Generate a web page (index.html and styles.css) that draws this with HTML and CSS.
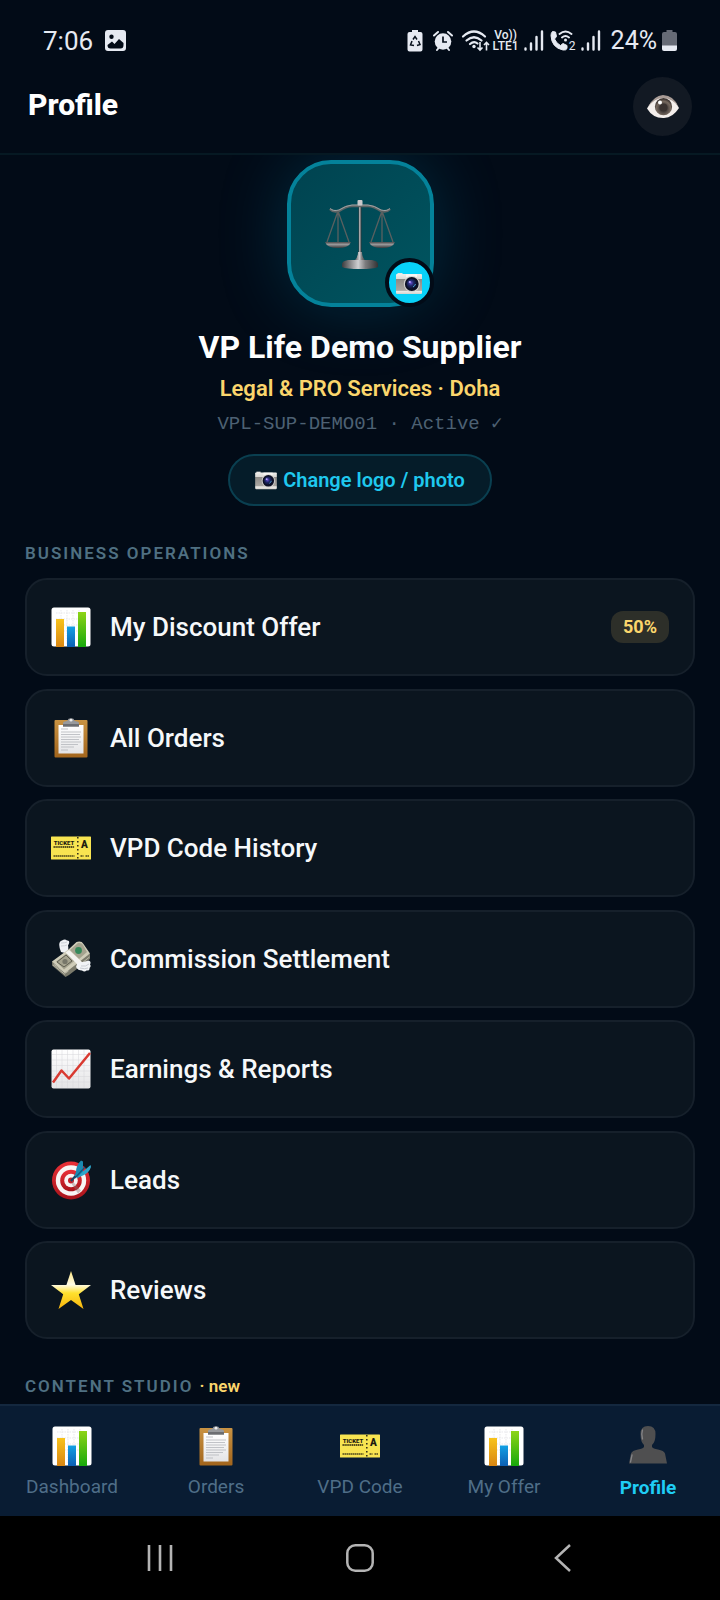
FILE: index.html
```html
<!DOCTYPE html>
<html lang="en">
<head>
<meta charset="utf-8">
<meta name="viewport" content="width=device-width, initial-scale=1">
<title>Profile</title>
<link rel="stylesheet" href="styles.css">
</head>
<body>
<svg class="sprite" aria-hidden="true">
  <defs>
    <linearGradient id="gold" x1="0" y1="0" x2="0" y2="1"><stop offset="0" stop-color="#f8c31c"/><stop offset="1" stop-color="#d98612"/></linearGradient>
    <linearGradient id="blue" x1="0" y1="0" x2="0" y2="1"><stop offset="0" stop-color="#12a0e4"/><stop offset="1" stop-color="#0c5fb4"/></linearGradient>
    <linearGradient id="green" x1="0" y1="0" x2="0" y2="1"><stop offset="0" stop-color="#8ed416"/><stop offset="1" stop-color="#17a80c"/></linearGradient>
    <linearGradient id="paper" x1="0" y1="0" x2="0" y2="1"><stop offset="0" stop-color="#ffffff"/><stop offset="1" stop-color="#e4e4e6"/></linearGradient>
    <linearGradient id="board" x1="0" y1="0" x2="0" y2="1"><stop offset="0" stop-color="#c99343"/><stop offset="1" stop-color="#a3651c"/></linearGradient>
    <linearGradient id="star" x1="0" y1="0" x2="0" y2="1"><stop offset="0" stop-color="#ffe680"/><stop offset=".36" stop-color="#fffbe6"/><stop offset=".58" stop-color="#ffe12e"/><stop offset="1" stop-color="#f8b40c"/></linearGradient>
    <linearGradient id="metal" x1="0" y1="0" x2="1" y2="0"><stop offset="0" stop-color="#3c3c3e"/><stop offset=".45" stop-color="#d0d0d2"/><stop offset=".65" stop-color="#7c7c7e"/><stop offset="1" stop-color="#333335"/></linearGradient>
    <linearGradient id="pan" x1="0" y1="0" x2="0" y2="1"><stop offset="0" stop-color="#4a4a4c"/><stop offset=".4" stop-color="#99999b"/><stop offset="1" stop-color="#39393b"/></linearGradient>
    <linearGradient id="camera" x1="0" y1="0" x2="0" y2="1"><stop offset="0" stop-color="#f0efec"/><stop offset=".24" stop-color="#dddbd7"/><stop offset=".26" stop-color="#8c8985"/><stop offset=".82" stop-color="#aaa7a2"/><stop offset=".85" stop-color="#efeeeb"/><stop offset="1" stop-color="#d5d2cd"/></linearGradient>
    <radialGradient id="lens" cx=".4" cy=".4" r=".6"><stop offset="0" stop-color="#6a4fd8"/><stop offset=".45" stop-color="#1e2868"/><stop offset="1" stop-color="#080c22"/></radialGradient>
    <radialGradient id="iris" cx=".5" cy=".6" r=".55"><stop offset="0" stop-color="#3b3330"/><stop offset=".4" stop-color="#4a4340"/><stop offset=".75" stop-color="#76695f"/><stop offset="1" stop-color="#3d3531"/></radialGradient>
    <linearGradient id="red" x1="0" y1="0" x2="0" y2="1"><stop offset="0" stop-color="#ea3037"/><stop offset="1" stop-color="#a9141b"/></linearGradient>
  </defs>

  <symbol id="i-bars" viewBox="0 0 40 40">
    <rect x=".5" y=".5" width="39" height="39" rx="2.5" fill="#fff"/>
    <path d="M5 6h30M5 12h30M5 18h30M5 24h30M10 3v34M16 3v34M22 3v34M28 3v34" stroke="#dedee2" stroke-width=".7" stroke-dasharray="1.5 1"/>
    <path d="M5 12h8v28H5z" fill="url(#gold)"/>
    <path d="M16 19.500h8V40h-8z" fill="url(#blue)"/>
    <path d="M27 5h8v35h-8z" fill="url(#green)"/>
  </symbol>

  <symbol id="i-clip" viewBox="0 0 40 40">
    <rect x="3.500" y="2" width="33" height="37.500" rx="1" fill="url(#board)"/>
    <path d="M7.500 7h25v28.500h-25z" fill="url(#paper)"/>
    <path d="M10 11h7M10 14h20M10 16.500h19M10 19h20M10 21.500h18M10 24h20M10 26.500h17M10 29h13M10 32h7" stroke="#b4b6bb" stroke-width=".8"/>
    <path d="M12 8.500V5q0-1.500 3-1.800l1.500-.7Q17 .3 20 .3t3.500 2.200l1.500.7q3 .3 3 1.800v3.500z" fill="#97999c"/>
    <path d="M12 6h16v2.600H12z" fill="#6c6e72"/>
    <circle cx="20" cy="2.200" r="1.400" fill="#ececee"/>
  </symbol>

  <symbol id="i-ticket" viewBox="0 0 40 40">
    <rect x="0" y="8.500" width="40" height="23" rx=".6" fill="#f8e451"/>
    <path d="M26.800 9v23" stroke="#2a2717" stroke-width="1.500" stroke-dasharray="1.500 2.500"/>
    <path d="M2.500 19h21" stroke="#554d1c" stroke-width="1.800" stroke-dasharray="1.400 .5"/>
    <path d="M2.500 28h21M29.500 28h3M34.500 28h3.500" stroke="#4f481b" stroke-width="1.500" stroke-dasharray="1.600 .4"/>
  </symbol>

  <symbol id="i-money" viewBox="0 0 40 40">
    <path d="M10 13Q6 3 11 1.500q3-2 5 0 3-.5 2 3l-1 2q1 4-1 8z" fill="#f0f2f5"/>
    <path d="M10 4q4 0 6-1M10 7q4 0 6-1" stroke="#cfd3d8" fill="none"/>
    <path d="M1 22.500v4L14.500 38l3.500-2L39 20v-5z" fill="#7b7a6b"/>
    <path d="M1 22.500 18 10l7.500-7q5-1.500 7 2L39 14.500 14 34z" fill="#cfccb8"/>
    <path d="M5 22.500l11-8 8 7-11 9zM19 11l8-7q4-.5 5 2l4 7-8 7z" fill="#a5a38f"/>
    <path d="M6 23l9-7 6 6-8 6z" fill="none" stroke="#605f52"/>
    <circle cx="27.500" cy="11.500" r="3.400" fill="#35895a"/>
    <circle cx="14" cy="22.500" r="2.600" fill="#77776a"/>
    <path d="M14.500 13.500 18 11l13 12v5l-3 2.300-2.500-5.800z" fill="#f3f2ee"/>
    <path d="M2 26l12 9.500M2.500 25l12 9 3-2M31 24l7.500-6" stroke="#d5d2c2" stroke-width=".7" fill="none"/>
    <path d="M25 28q1-5 7-5l6-1.500q2.500 1.500 1 4 1.500 2-.5 3.500.5 3-3 2.500-2 2-4.500 0-4 0-6-3.500z" fill="#f2f4f6"/>
    <path d="M30 27q5 1 8-2M29 29q5 1.500 8 0" fill="none" stroke="#c9cdd3"/>
  </symbol>

  <symbol id="i-trend" viewBox="0 0 40 40">
    <rect x=".5" y=".5" width="39" height="39" rx="2" fill="url(#paper)"/>
    <path d="M1 5.500h38M1 11h38M1 16.500h38M1 22h38M1 27.500h38M1 33h38M5.500 1v38M11 1v38M16.500 1v38M22 1v38M27.500 1v38M33 1v38" stroke="#d6d6da" stroke-width=".5"/>
    <path d="M2 33.500 10.500 21.500l7.500 8L39 4" fill="none" stroke="#d93a31" stroke-width="2.500" stroke-linejoin="round"/>
  </symbol>

  <symbol id="i-target" viewBox="0 0 40 40">
    <circle cx="20" cy="20.500" r="19" fill="url(#red)"/>
    <circle cx="20" cy="20.500" r="15.200" fill="#f8f5f4"/>
    <circle cx="20" cy="20.500" r="10.800" fill="url(#red)"/>
    <circle cx="20" cy="20.500" r="6.800" fill="#f8f5f4"/>
    <circle cx="20" cy="20.500" r="3" fill="#c7222a"/>
    <path d="M21 20.500l9 10-3 3-6-9z" fill="#8d7272" opacity=".4"/>
    <path d="M20 21l9-10" stroke="#1b4565" stroke-width="2.200"/>
    <path d="M25 12l-1.500 3.500 3 2.500L32 13V1.500L30 .5q-5 5-5 11.500z" fill="#1c8ab2"/>
    <path d="M25.500 18.500l6.500-7 7.500-6.500.5 2q-2 6-8 8.500-3 1-6.500 3z" fill="#2ea6cb"/>
    <path d="M24 18 34 7" stroke="#115a80" stroke-width="1.200"/>
  </symbol>

  <symbol id="i-star" viewBox="0 0 40 40">
    <path d="M20 1 24.600 15H40L27.800 24.200 32.500 39 20 30 7.500 39l4.700-14.800L0 15h15.400z" fill="url(#star)"/>
  </symbol>

  <symbol id="i-person" viewBox="0 0 40 40">
    <path d="M20 0q7.500 0 7.500 8 0 8-3.500 11v2q1 1.500 6 2.500 6 1 7 4l2 10H1l2-10q1-3 7-4 5-1 6-2.500v-2q-3.500-3-3.500-11 0-8 7.500-8z" fill="#4f4f50"/>
    <path d="M14.500 4q-1.500 4 0 9M4 29l-1.500 7" stroke="#858588" stroke-width="1.300" fill="none" stroke-linecap="round"/>
  </symbol>

  <symbol id="i-camera" viewBox="0 0 26 24">
    <path d="M1.500 4V2h5v2z" fill="#e8e6e2"/>
    <rect y="3" width="26" height="20" rx="1" fill="url(#camera)"/>
    <path d="M10 3.200h11v3H10z" fill="#f8f7f4"/>
    <circle cx="15.800" cy="13" r="8" fill="#d5d3cf"/>
    <circle cx="15.800" cy="13" r="6.900" fill="#0d1024"/>
    <circle cx="15.800" cy="13" r="5.200" fill="url(#lens)"/>
    <circle cx="13.800" cy="11" r="1.100" fill="#b9a7ff"/>
    <path d="M17 16q2-1 2.500-3" stroke="#4aa6d8" fill="none"/>
  </symbol>

  <symbol id="i-eye" viewBox="0 0 32 26">
    <path d="M0 14.500Q6 2.500 16 2 26 2 32 14 26 23.500 17 24 6 24.500 0 14.500z" fill="#f4efec"/>
    <path d="M1 13Q7 1.500 16 1 27 1.500 31.500 13 26 4.500 16 4 7 4.500 1 13z" fill="#a99c96"/>
    <circle cx="16.500" cy="12.700" r="8.600" fill="url(#iris)"/>
    <circle cx="16.500" cy="13.500" r="4" fill="#393230"/>
    <circle cx="13" cy="8.500" r="2" fill="#fff"/>
  </symbol>

  <symbol id="i-scales" viewBox="0 0 70 70">
    <path d="M33.600 4h2.800v52h-2.800z" fill="url(#metal)"/>
    <path d="M5 10q3 3.500 9 2 7-5 13-5h16q6 0 13 5 6 1.500 9-2" fill="none" stroke="#5e6465" stroke-width="2.600"/>
    <path d="M5 9.500q3 3 9 1.500 7-4.500 13-5h16q6 .5 13 5 6 1.500 9-1.500" fill="none" stroke="#a0a5a6" stroke-width="1"/>
    <rect x="32.500" y="1" width="5" height="5.500" rx="1" fill="#c9c9cb"/>
    <path d="M13 12 2 43M13 12v31M13 12l11 31M57 12 46 43M57 12v31M57 12l11 31" stroke="#596060" stroke-width="1.300" fill="none"/>
    <path d="M0 43h26q-2 6-13 6T0 43zM44 43h26q-2 6-13 6t-13-6z" fill="url(#pan)"/>
    <path d="M33 53h4q0 6 4 9H29q4-3 4-9z" fill="url(#metal)"/>
    <path d="M17 65q0-3 6-4h24q6 1 6 4v3q-4 2-18 2t-18-2z" fill="url(#metal)"/>
  </symbol>

  <symbol id="i-signal" viewBox="0 0 20 21">
    <path d="M1.500 18.500v1M7 13.500v6M12.500 7v12.500M18 1.500v18" stroke="currentColor" stroke-width="2.400" stroke-linecap="round"/>
  </symbol>
</svg>

<div class="phone">
  <div class="status">
    <div class="status-left">
      <time>7:06</time>
      <svg width="21" height="21" viewBox="0 0 21 21"><path fill="currentColor" fill-rule="evenodd" d="M3 0h15q3 0 3 3v15q0 3-3 3H3q-3 0-3-3V3q0-3 3-3zm3.500 4.500a2.200 2.200 0 1 0 0 4.400 2.200 2.200 0 0 0 0-4.400zM2.500 15q0 3.500 3 3.500h10q3 0 3-3.500v-2L14 9l-4.500 5L7 11.500z"/></svg>
    </div>
    <div class="status-right">
      <svg width="21" height="22" viewBox="0 0 21 22"><path d="M5 0h6v2h2.500q2 0 2 2v15.500q0 2-2 2h-11q-2 0-2-2V4q0-2 2-2H5z" fill="currentColor"/><path d="M6 9.500 8 6.500l2 3M11.500 11l1.500 3.500-3 1M7 15.500l-3.500-.5L5 11" fill="none" stroke="#07101c" stroke-width="1.500"/></svg>
      <svg width="24" height="22" viewBox="0 0 24 22"><path d="M1 5.500 5 2M19 5.500 15 2M4 20l2-2.500M16 20l-2-2.500" stroke="currentColor" stroke-width="2" stroke-linecap="round"/><circle cx="10" cy="11.500" r="8.300" fill="currentColor"/><path d="M10 6.500V12h4" fill="none" stroke="#07101c" stroke-width="1.700"/></svg>
      <svg width="26" height="22" viewBox="0 0 26 22" overflow="visible"><path d="M1 6.500Q12 -3.500 23 6.500M4.500 10.500Q12 4 19.500 10.500M8 14q4-3.500 7.500-.5" fill="none" stroke="currentColor" stroke-width="2.200" stroke-linecap="round"/><circle cx="12" cy="16.500" r="1.700" fill="currentColor"/><path d="M18 12v8M15.500 17.500 18 20l2.500-2.500M24.500 20.500V12.500M22 15l2.500-2.500L27 15" fill="none" stroke="currentColor" stroke-width="1.600"/></svg>
      <span class="volte"><span>Vo))</span><span>LTE1</span></span>
      <svg width="21" height="21" viewBox="0 0 21 21"><use href="#i-signal" width="20" height="21"/></svg>
      <span class="call">
        <svg width="26" height="21" viewBox="0 0 26 21"><path d="M2.500 1.500 5.500 2l1 4.500L4.500 9q2 4.500 6 6.500l2.500-2 4 2v3q-1 2-4 1.500Q1.500 17.500 1 5.500 1 3 2.500 1.500z" fill="currentColor" stroke="currentColor" stroke-linejoin="round"/><path d="M9.500 4q6-5 12 0M12 7.500q3.500-3 7 0" fill="none" stroke="currentColor" stroke-width="1.900" stroke-linecap="round"/><circle cx="15.500" cy="10" r="1.500" fill="currentColor"/></svg>
        <small>2</small>
      </span>
      <svg width="25" height="21" viewBox="0 0 25 21"><use href="#i-signal" width="20" height="21"/></svg>
      <span class="percent">24%</span>
      <svg width="15" height="21" viewBox="0 0 15 21"><path d="M4.500 0h6v2H13q2 0 2 2v12H0V4q0-2 2-2h2.500z" fill="#666b76"/><path d="M0 15.500h15V19q0 2-2 2H2q-2 0-2-2z" fill="currentColor"/></svg>
    </div>
  </div>

  <header class="topbar">
    <h1>Profile</h1>
    <button class="eye" type="button" aria-label="Preview profile"><svg width="32" height="26"><use href="#i-eye"/></svg></button>
  </header>

  <main>
    <section class="hero">
      <div class="avatar">
        <svg width="70" height="70"><use href="#i-scales"/></svg>
        <button class="avatar-edit" type="button" aria-label="Edit photo"><svg width="26" height="24"><use href="#i-camera"/></svg></button>
      </div>
      <h2>VP Life Demo Supplier</h2>
      <p class="trade">Legal &amp; PRO Services · Doha</p>
      <p class="code">VPL-SUP-DEMO01 · Active ✓</p>
      <button class="change" type="button"><svg width="22" height="20"><use href="#i-camera"/></svg>Change logo / photo</button>
    </section>

    <h3 class="label">Business operations</h3>
    <div class="rows">
      <button class="row" type="button"><svg class="icon"><use href="#i-bars"/></svg><span>My Discount Offer</span><b>50%</b></button>
      <button class="row" type="button"><svg class="icon"><use href="#i-clip"/></svg><span>All Orders</span></button>
      <button class="row" type="button"><svg class="icon" viewBox="0 0 40 40"><use href="#i-ticket"/><text x="13" y="16.500" class="ticket-word" text-anchor="middle">TICKET</text><text x="33.400" y="20" class="ticket-letter" text-anchor="middle">A</text></svg><span>VPD Code History</span></button>
      <button class="row" type="button"><svg class="icon"><use href="#i-money"/></svg><span>Commission Settlement</span></button>
      <button class="row" type="button"><svg class="icon"><use href="#i-trend"/></svg><span>Earnings &amp; Reports</span></button>
      <button class="row" type="button"><svg class="icon"><use href="#i-target"/></svg><span>Leads</span></button>
      <button class="row" type="button"><svg class="icon"><use href="#i-star"/></svg><span>Reviews</span></button>
    </div>
    <h3 class="label">Content studio <em>· new</em></h3>
  </main>

  <nav class="tabs" aria-label="Sections">
    <a href="#dashboard"><svg class="icon"><use href="#i-bars"/></svg>Dashboard</a>
    <a href="#orders"><svg class="icon"><use href="#i-clip"/></svg>Orders</a>
    <a href="#code"><svg class="icon" viewBox="0 0 40 40"><use href="#i-ticket"/><text x="13" y="16.500" class="ticket-word" text-anchor="middle">TICKET</text><text x="33.400" y="20" class="ticket-letter" text-anchor="middle">A</text></svg>VPD Code</a>
    <a href="#offer"><svg class="icon"><use href="#i-bars"/></svg>My Offer</a>
    <a href="#profile" class="active" aria-current="page"><svg class="icon"><use href="#i-person"/></svg>Profile</a>
  </nav>

  <div class="system">
    <button type="button" aria-label="Recent apps"><svg width="28" height="28" viewBox="0 0 28 28"><path d="M3 1v26M14 1v26M25 1v26" stroke="currentColor" stroke-width="2.600"/></svg></button>
    <button type="button" aria-label="Home"><svg width="28" height="28" viewBox="0 0 28 28"><rect x="1.300" y="1.300" width="25.400" height="25.400" rx="8" fill="none" stroke="currentColor" stroke-width="2.500"/></svg></button>
    <button type="button" aria-label="Back"><svg width="28" height="28" viewBox="0 0 28 28"><path d="M24 1 10 14l14 13" fill="none" stroke="currentColor" stroke-width="2.500"/></svg></button>
  </div>
</div>
</body>
</html>
```

FILE: styles.css
```css
* { box-sizing: border-box; }

body {
  margin: 0;
  background: #020b17;
  color: #fff;
  font-family: Roboto, "Noto Sans", sans-serif;
}

h1, h2, h3, p { margin: 0; }

button {
  margin: 0;
  padding: 0;
  border: 0;
  background: none;
  color: inherit;
  font: inherit;
  cursor: pointer;
}

svg { display: block; flex: none; }

.sprite { position: absolute; width: 0; height: 0; }

.ticket-word { font: 900 6px Roboto, sans-serif; fill: #1e1c10; }
.ticket-letter { font: 900 10px Roboto, sans-serif; fill: #1e1c10; }

.phone {
  display: flex;
  flex-direction: column;
  height: 100vh;
}

/* Status bar */
.status {
  display: flex;
  justify-content: space-between;
  padding: 25px 43px 15px;
  color: #e6eaf2;
}

.status-left, .status-right { display: flex; align-items: center; height: 31px; }
.status-left { gap: 12px; font-size: 26px; }
.status-right { gap: 5px; }
.percent { font-size: 25px; }

.volte {
  display: flex;
  flex-direction: column;
  align-items: center;
  width: 26px;
  font-size: 12px;
  font-weight: 500;
  line-height: 11px;
}

.call { position: relative; }
.call small {
  position: absolute;
  right: 0;
  bottom: -1px;
  font-size: 12px;
  line-height: 12px;
}

/* Title bar */
.topbar {
  display: flex;
  align-items: flex-start;
  justify-content: space-between;
  padding: 6px 28px 17px;
  border-bottom: 2px solid #061923;
}

.topbar h1 {
  font-size: 30px;
  font-weight: 800;
  line-height: 56px;
}

.eye {
  display: grid;
  place-items: center;
  width: 59px;
  height: 59px;
  border-radius: 50%;
  background: #121923;
}

/* Content */
main {
  display: flex;
  flex: 1;
  flex-direction: column;
  min-height: 0;
  overflow: hidden;
  padding: 5px 25px 7px;
}

.hero {
  display: flex;
  flex-direction: column;
  align-items: center;
}

.avatar {
  position: relative;
  display: grid;
  place-items: center;
  width: 147px;
  height: 147px;
  border: 4px solid #04829a;
  border-radius: 44px;
  background: linear-gradient(135deg, #004350, #005560);
  box-shadow: 0 0 70px rgba(0, 150, 200, 0.24);
}

.avatar-edit {
  position: absolute;
  right: -4px;
  bottom: -4px;
  display: grid;
  place-items: center;
  width: 49px;
  height: 49px;
  border: 4px solid #020b17;
  border-radius: 50%;
  background: #08d2f9;
}

.hero h2 {
  margin-top: 20px;
  font-size: 32px;
  font-weight: 700;
  line-height: 40px;
}

.trade {
  margin-top: 8px;
  color: #fbd66c;
  font-size: 22px;
  font-weight: 600;
  line-height: 28px;
}

.code {
  margin-top: 7px;
  color: #4d6173;
  font-family: "Liberation Mono", "DejaVu Sans Mono", monospace;
  font-size: 19px;
  line-height: 28px;
}

.change {
  display: flex;
  align-items: center;
  gap: 6px;
  height: 52px;
  margin-top: 16px;
  padding: 0 25px;
  border: 2px solid #0a3f50;
  border-radius: 26px;
  background: #051c29;
  color: #1fc8ee;
  font-size: 20px;
  font-weight: 600;
}

.label {
  margin-top: 36px;
  color: #4f7082;
  font-size: 17px;
  font-weight: 600;
  letter-spacing: 2px;
  line-height: 22px;
  text-transform: uppercase;
}

.label em {
  color: #fbd66c;
  font-style: normal;
  letter-spacing: normal;
  text-transform: none;
}

.rows {
  display: flex;
  flex: 1;
  flex-direction: column;
  justify-content: space-between;
  gap: 12px;
  margin-top: 14px;
}

.row {
  display: flex;
  align-items: center;
  gap: 19px;
  height: 98px;
  padding: 0 24px;
  border: 2px solid #16202b;
  border-radius: 22px;
  background: #0b151f;
  color: #f6f8fa;
  font-size: 26px;
  font-weight: 500;
  text-align: left;
}

.row span { flex: 1; }

.row b {
  padding: 0 12px;
  border-radius: 12px;
  background: #2d2f29;
  color: #fbd66c;
  font-size: 18px;
  font-weight: 700;
  line-height: 32px;
}

.icon { width: 40px; height: 40px; }

/* Tab bar */
.tabs {
  display: grid;
  grid-template-columns: repeat(5, 1fr);
  padding: 20px 0 16px;
  border-top: 2px solid #14283f;
  background: #091c33;
}

.tabs a {
  display: flex;
  flex-direction: column;
  align-items: center;
  gap: 8px;
  color: #4f6e88;
  font-size: 19px;
  line-height: 26px;
  text-decoration: none;
}

.tabs .active {
  gap: 10px;
  color: #1fcdf5;
  font-weight: 700;
  line-height: 24px;
}

/* System navigation */
.system {
  display: flex;
  align-items: center;
  justify-content: space-between;
  height: 84px;
  padding: 0 146px;
  background: #000;
  color: #b4b4b4;
}
```
